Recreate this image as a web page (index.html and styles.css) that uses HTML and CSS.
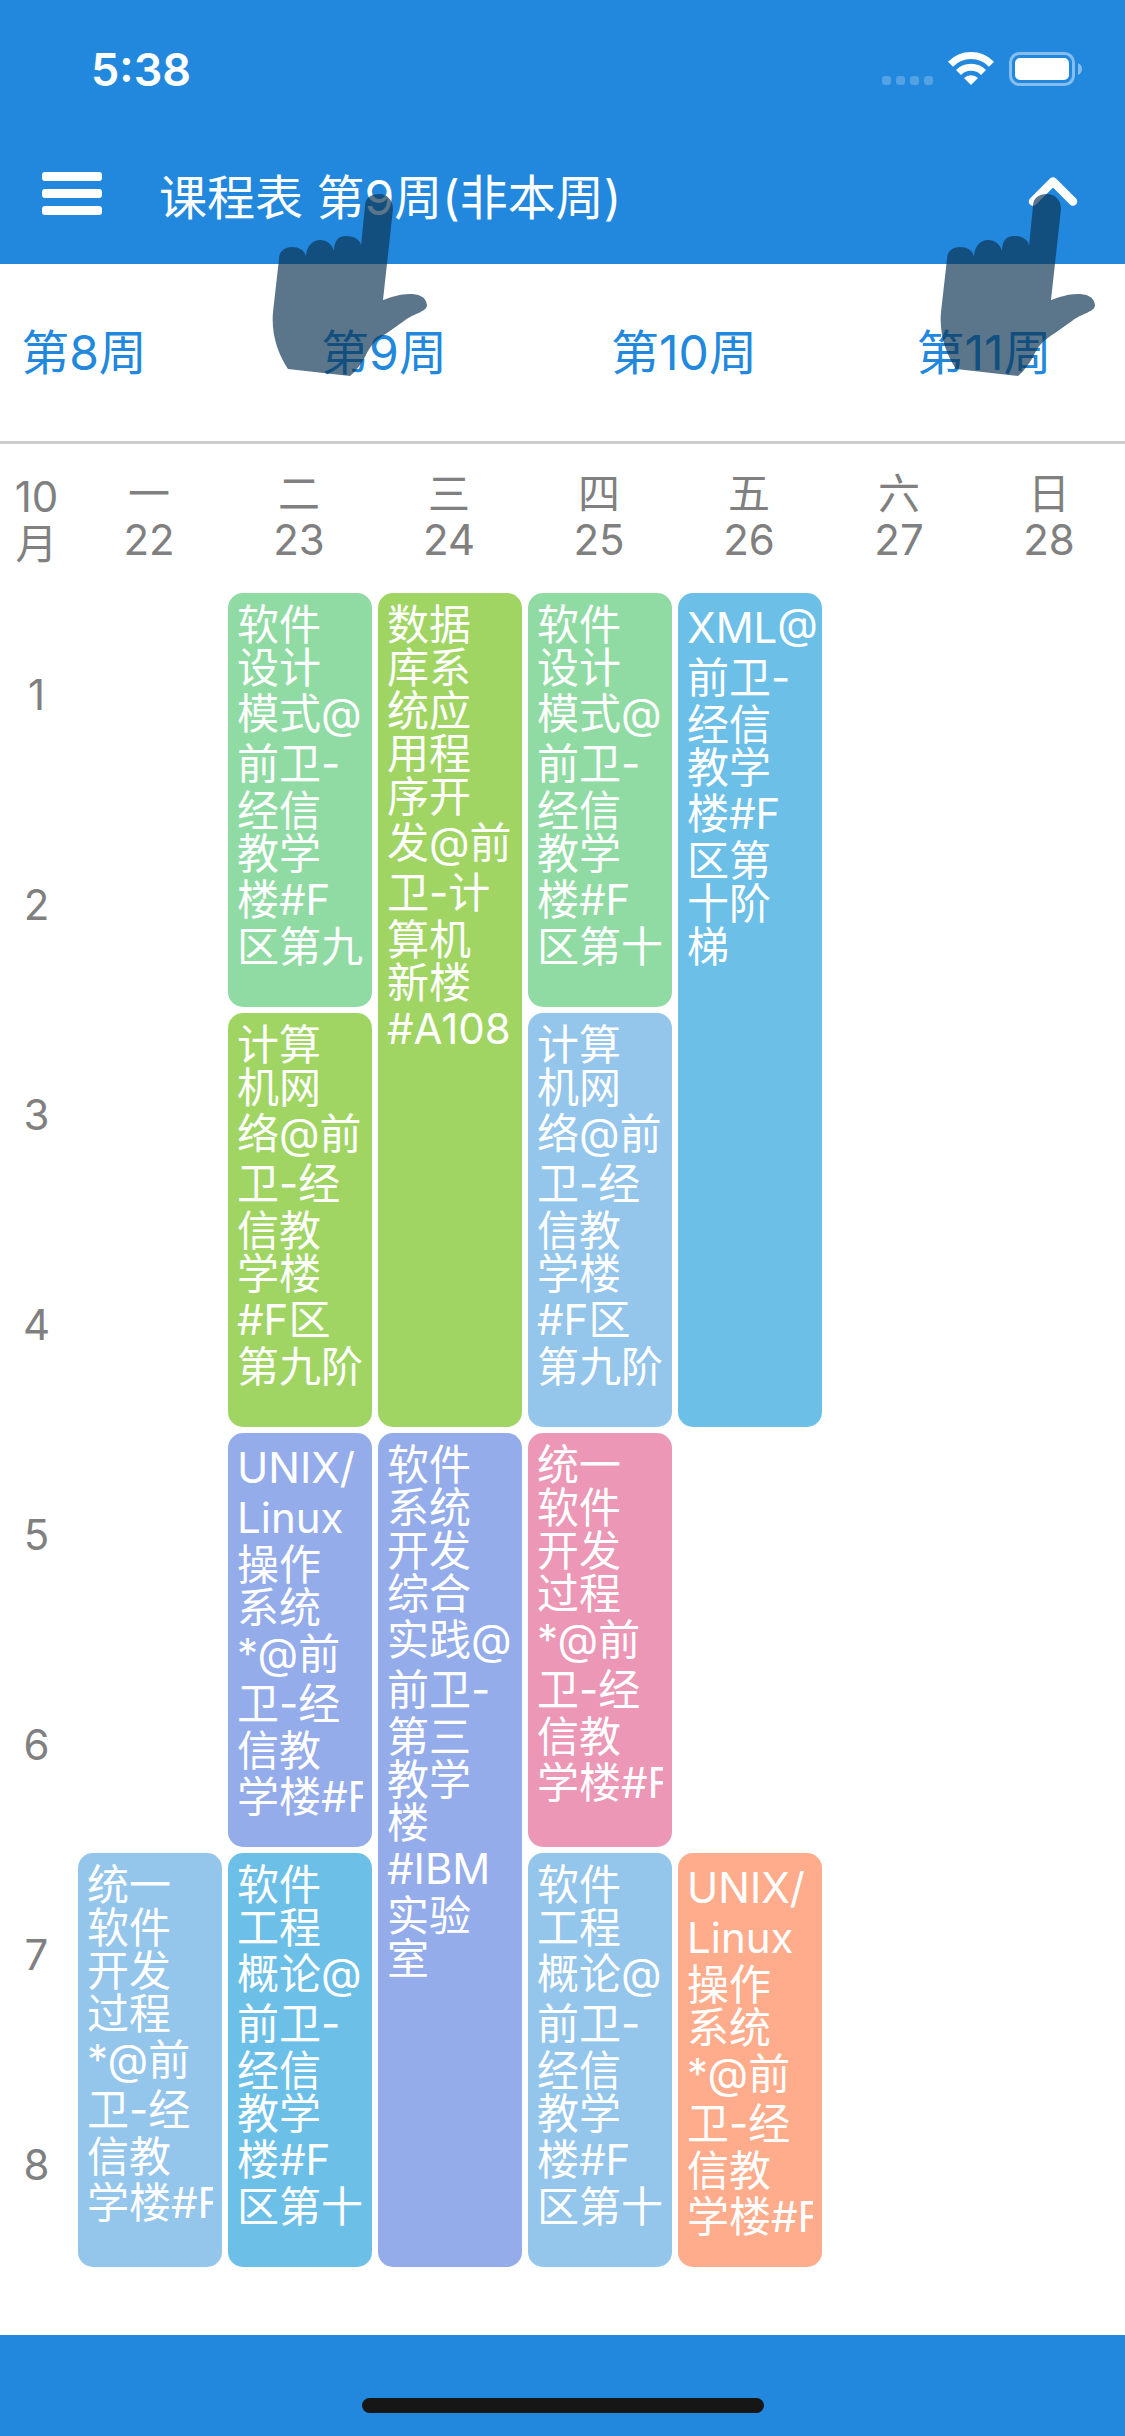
FILE: index.html
```html
<!DOCTYPE html>
<html lang="zh-CN">
<head>
<meta charset="utf-8">
<meta name="viewport" content="width=device-width, initial-scale=1">
<title>课程表</title>
<link rel="stylesheet" href="styles.css">
</head>
<body>
<header class="top">
  <div class="status">
    <span class="clock">5:38</span>
    <svg class="indicators" width="202" height="36" viewBox="0 0 202 36" aria-hidden="true">
      <g fill="#fff" fill-opacity=".22">
        <rect x="2" y="25" width="9" height="9" rx="3"/>
        <rect x="16" y="25" width="9" height="9" rx="3"/>
        <rect x="30" y="25" width="9" height="9" rx="3"/>
        <rect x="44" y="25" width="9" height="9" rx="3"/>
      </g>
      <g fill="none" stroke="#fff" stroke-width="7">
        <path d="M70.500 13.200a28.500 28.500 0 0 1 41 0"/>
        <path d="M78.500 21.500a17.500 17.500 0 0 1 25 0"/>
      </g>
      <path d="M91 34l-7-7a10 10 0 0 1 14 0z" fill="#fff"/>
      <rect x="130.500" y="2.500" width="63" height="31" rx="9" fill="none" stroke="#fff" stroke-opacity=".45" stroke-width="3"/>
      <rect x="135" y="7" width="54" height="22" rx="5" fill="#fff"/>
      <path d="M198 12q4 2 4 6t-4 6z" fill="#fff" fill-opacity=".45"/>
    </svg>
  </div>
  <div class="bar">
    <button class="icon-button" type="button" aria-label="菜单">
      <svg width="60" height="44" viewBox="0 0 60 44" fill="#fff"><rect y="0" width="60" height="9" rx="3"/><rect y="17" width="60" height="9" rx="3"/><rect y="34" width="60" height="9" rx="3"/></svg>
    </button>
    <h1 class="title">课程表 第9周(非本周)</h1>
    <button class="icon-button" type="button" aria-label="收起">
      <svg width="50" height="44" viewBox="0 0 50 44" fill="none" stroke="#fff" stroke-width="8.500" stroke-linecap="round" stroke-linejoin="round"><path d="M5 29.500L25 9.500L45 29.500"/></svg>
    </button>
  </div>
</header>

<nav class="weeks" aria-label="周次">
  <a href="#week8">第8周</a>
  <a href="#week9">第9周</a>
  <a href="#week10">第10周</a>
  <a href="#week11">第11周</a>
</nav>

<main class="content">
  <table class="timetable">
    <thead>
      <tr>
        <th class="hour-col" scope="col"><span class="mixed">10</span><span>月</span></th>
        <th scope="col"><span>一</span><span class="mixed">22</span></th>
        <th scope="col"><span>二</span><span class="mixed">23</span></th>
        <th scope="col"><span>三</span><span class="mixed">24</span></th>
        <th scope="col"><span>四</span><span class="mixed">25</span></th>
        <th scope="col"><span>五</span><span class="mixed">26</span></th>
        <th scope="col"><span>六</span><span class="mixed">27</span></th>
        <th scope="col"><span>日</span><span class="mixed">28</span></th>
      </tr>
    </thead>
    <tbody>
      <tr>
        <th scope="row">1</th>
        <td></td>
        <td class="course mint" rowspan="2"><p><span>软件</span><span>设计</span><span class="mixed">模式@</span><span class="mixed">前卫-</span><span>经信</span><span>教学</span><span class="mixed">楼#F</span><span>区第九</span></p></td>
        <td class="course lime" rowspan="4"><p><span>数据</span><span>库系</span><span>统应</span><span>用程</span><span>序开</span><span class="mixed">发@前</span><span class="mixed">卫-计</span><span>算机</span><span>新楼</span><span class="mixed">#A108</span></p></td>
        <td class="course mint" rowspan="2"><p><span>软件</span><span>设计</span><span class="mixed">模式@</span><span class="mixed">前卫-</span><span>经信</span><span>教学</span><span class="mixed">楼#F</span><span>区第十</span></p></td>
        <td class="course cyan" rowspan="4"><p><span class="mixed">XML@</span><span class="mixed">前卫-</span><span>经信</span><span>教学</span><span class="mixed">楼#F</span><span>区第</span><span>十阶</span><span>梯</span></p></td>
        <td></td>
        <td></td>
      </tr>
      <tr>
        <th scope="row">2</th>
        <td></td>
        <td></td>
        <td></td>
      </tr>
      <tr>
        <th scope="row">3</th>
        <td></td>
        <td class="course lime" rowspan="2"><p><span>计算</span><span>机网</span><span class="mixed">络@前</span><span class="mixed">卫-经</span><span>信教</span><span>学楼</span><span class="mixed">#F区</span><span>第九阶</span></p></td>
        <td class="course sky" rowspan="2"><p><span>计算</span><span>机网</span><span class="mixed">络@前</span><span class="mixed">卫-经</span><span>信教</span><span>学楼</span><span class="mixed">#F区</span><span>第九阶</span></p></td>
        <td></td>
        <td></td>
      </tr>
      <tr>
        <th scope="row">4</th>
        <td></td>
        <td></td>
        <td></td>
      </tr>
      <tr>
        <th scope="row">5</th>
        <td></td>
        <td class="course iris" rowspan="2"><p><span class="mixed">UNIX/</span><span class="mixed">Linux</span><span>操作</span><span>系统</span><span class="mixed">*@前</span><span class="mixed">卫-经</span><span>信教</span><span class="mixed">学楼#F</span></p></td>
        <td class="course iris" rowspan="4"><p><span>软件</span><span>系统</span><span>开发</span><span>综合</span><span class="mixed">实践@</span><span class="mixed">前卫-</span><span>第三</span><span>教学</span><span>楼</span><span class="mixed">#IBM</span><span>实验</span><span>室</span></p></td>
        <td class="course pink" rowspan="2"><p><span>统一</span><span>软件</span><span>开发</span><span>过程</span><span class="mixed">*@前</span><span class="mixed">卫-经</span><span>信教</span><span class="mixed">学楼#F</span></p></td>
        <td></td>
        <td></td>
        <td></td>
      </tr>
      <tr>
        <th scope="row">6</th>
        <td></td>
        <td></td>
        <td></td>
        <td></td>
      </tr>
      <tr>
        <th scope="row">7</th>
        <td class="course sky" rowspan="2"><p><span>统一</span><span>软件</span><span>开发</span><span>过程</span><span class="mixed">*@前</span><span class="mixed">卫-经</span><span>信教</span><span class="mixed">学楼#F</span></p></td>
        <td class="course cyan" rowspan="2"><p><span>软件</span><span>工程</span><span class="mixed">概论@</span><span class="mixed">前卫-</span><span>经信</span><span>教学</span><span class="mixed">楼#F</span><span>区第十</span></p></td>
        <td class="course sky" rowspan="2"><p><span>软件</span><span>工程</span><span class="mixed">概论@</span><span class="mixed">前卫-</span><span>经信</span><span>教学</span><span class="mixed">楼#F</span><span>区第十</span></p></td>
        <td class="course peach" rowspan="2"><p><span class="mixed">UNIX/</span><span class="mixed">Linux</span><span>操作</span><span>系统</span><span class="mixed">*@前</span><span class="mixed">卫-经</span><span>信教</span><span class="mixed">学楼#F</span></p></td>
        <td></td>
        <td></td>
      </tr>
      <tr>
        <th scope="row">8</th>
        <td></td>
        <td></td>
      </tr>
    </tbody>
  </table>
</main>

<footer class="bottom"><div class="home-indicator"></div></footer>

<svg width="0" height="0" class="defs" aria-hidden="true">
  <symbol id="hand" viewBox="0 0 155 182">
    <path d="M107 0C99 0 93 4 93 12L89 52C89 46 82 42 74 42C66 42 62 47 62 57C60 50 55 46 48 46C40 46 34 53 34 63C33 56 27 53 20 53C12 53 7 58 7 65L1 118C-1 140 6 160 16 175L78 182C84 177 89 170 93 163C99 150 104 146 115 139L132 127C142 119 155 118 155 111C154 102 146 100 137 100C129 100 119 103 111 106L121 15C121 6 115 0 107 0Z"/>
  </symbol>
</svg>
<svg class="hand hand-title" width="155" height="182" aria-hidden="true"><use href="#hand"/></svg>
<svg class="hand hand-toggle" width="155" height="182" aria-hidden="true"><use href="#hand"/></svg>
</body>
</html>
```
FILE: styles.css
```css
* {
  box-sizing: border-box;
}

body {
  position: relative;
  display: flex;
  flex-direction: column;
  min-height: 100vh;
  margin: 0;
  overflow-x: hidden;
  background: #fff;
  color: #808080;
  font-family: Inter, "Noto Sans CJK SC", sans-serif;
  font-size: 42px;
  font-weight: 400;
  line-height: 43px;
}

.top {
  background: #2288dd;
  color: #fff;
}

.status {
  display: flex;
  align-items: center;
  justify-content: space-between;
  height: 132px;
  padding: 6px 43px 0 91px;
}

.clock {
  font-size: 45px;
  font-weight: 600;
}

.indicators {
  display: block;
}

.bar {
  display: flex;
  align-items: center;
  height: 132px;
  padding: 0 47px 8px 42px;
}

.icon-button {
  display: block;
  padding: 0;
  border: 0;
  background: none;
}

.icon-button svg {
  display: block;
}

.title {
  flex: 1;
  margin: 0;
  padding: 8px 0 0 57px;
  font-size: 48px;
  font-weight: 400;
  line-height: 56px;
}

.weeks {
  display: flex;
  align-items: center;
  height: 180px;
  overflow: hidden;
  border-bottom: 3px solid #ccc;
  font-size: 48px;
  line-height: 56px;
}

.weeks a {
  flex: 0 0 300px;
  color: #2288dd;
  text-align: center;
  text-decoration: none;
}

.weeks a:first-child {
  margin-left: -66px;
}

.content {
  flex: 1;
  padding-bottom: 65px;
}

.timetable {
  width: 100%;
  table-layout: fixed;
  border-collapse: separate;
  border-spacing: 0;
}

.timetable th {
  padding: 0 2px 2px 0;
  font-weight: 400;
  text-align: center;
}

.timetable thead th {
  padding: 28px 2px 25px 0;
}

.timetable .hour-col {
  width: 75px;
}

.timetable span {
  display: block;
  white-space: nowrap;
}

.timetable .mixed {
  line-height: 50px;
}

.timetable tbody tr {
  height: 210px;
}

.timetable td {
  padding: 0;
}

/* The transparent border is the gap between neighbouring courses. */
.timetable .course {
  padding: 10px 9px 0;
  border: 3px solid transparent;
  border-radius: 18px;
  background-clip: padding-box;
  color: #fff;
  vertical-align: top;
}

.course p {
  margin: 0;
  overflow: hidden;
}

/* Four-hour courses have room for their whole text. */
.course[rowspan="4"] p {
  overflow: visible;
}

.mint { background-color: #90dba3; }
.lime { background-color: #a0d564; }
.sky { background-color: #94c5eb; }
.cyan { background-color: #6cc0e7; }
.iris { background-color: #94acea; }
.pink { background-color: #eb97b5; }
.peach { background-color: #ffac8c; }

.bottom {
  display: flex;
  align-items: flex-end;
  justify-content: center;
  height: 101px;
  padding-bottom: 23px;
  background: #2288dd;
}

.home-indicator {
  width: 402px;
  height: 15px;
  border-radius: 8px;
  background: #161616;
}

.defs {
  position: absolute;
}

/* Pointing hands of the usage tip, laid over the page. */
.hand {
  position: absolute;
  top: 194px;
  fill: rgba(10, 50, 80, 0.67);
  pointer-events: none;
}

.hand-title {
  left: 272px;
}

.hand-toggle {
  right: 30px;
}
```
